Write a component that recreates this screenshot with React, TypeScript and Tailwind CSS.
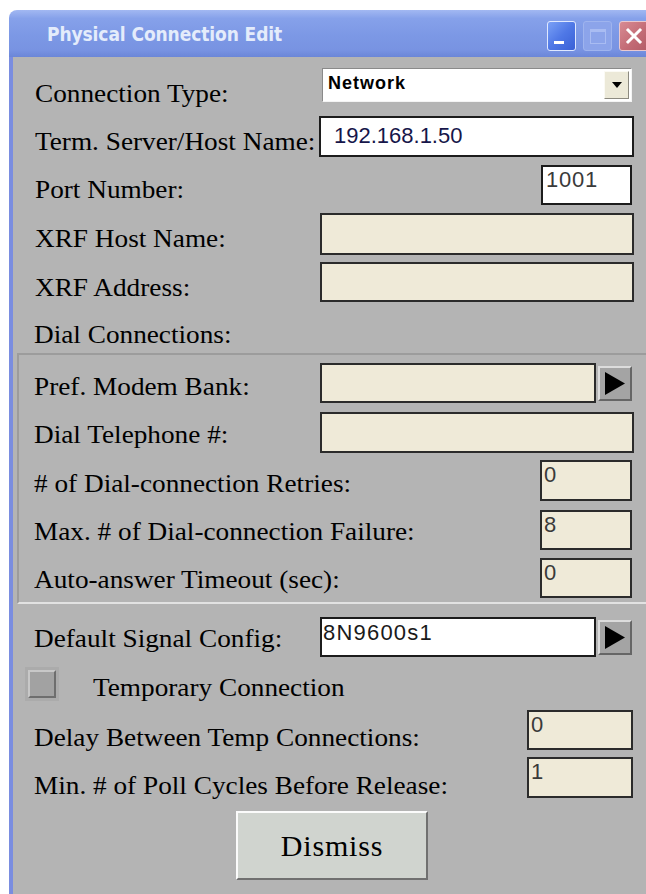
import React from "react";

function RightArrowButton() {
  return (
    <div className="w-[34px] h-[35px] bg-[#a4a4a4] border-2 border-t-[#dcdcdc] border-l-[#dcdcdc] border-b-[#666666] border-r-[#666666] flex items-center justify-center">
      <svg width="22" height="23" viewBox="0 0 22 23">
        <path d="M1 0 L21 11.5 L1 23 Z" fill="#000" />
      </svg>
    </div>
  );
}

function TitleBar() {
  return (
    <div className="h-[47px] rounded-tl-[8px] bg-[linear-gradient(to_bottom,#a2b8f2_0%,#86a1ea_18%,#7c98e5_55%,#7893e2_85%,#6b86d8_100%)] flex items-start overflow-hidden">
      <div className="ml-[38px] mt-[15px] text-[19px] leading-none font-bold text-[#e4ecfb] font-['DejaVu_Sans_Condensed','DejaVu_Sans',sans-serif] tracking-[-0.1px]">
        Physical Connection Edit
      </div>
      <div className="ml-auto mt-[11px] flex gap-[7px] w-[99px] overflow-hidden shrink-0">
        {/* minimize */}
        <div className="relative w-[29px] h-[30px] shrink-0 rounded-[3px] border border-[#dfe8ff] bg-[linear-gradient(135deg,#7aa0f6_0%,#4f78e6_50%,#3a60d6_100%)]">
          <div className="absolute left-[6px] bottom-[6px] w-[10px] h-[3px] bg-white" />
        </div>
        {/* maximize (disabled) */}
        <div className="relative w-[29px] h-[30px] shrink-0 rounded-[3px] border border-[#9fb4ee] bg-[#8ca4ea] flex items-center justify-center">
          <div className="w-[16px] h-[15px] border border-[#a9bcf2] border-t-[3px]" />
        </div>
        {/* close */}
        <div className="relative w-[30px] h-[30px] shrink-0 rounded-[3px] border border-[#e9c9cf] bg-[linear-gradient(135deg,#d88b93_0%,#c26a74_60%,#b35c67_100%)] flex items-center justify-center">
          <svg width="18" height="18" viewBox="0 0 18 18">
            <path d="M3 3 L15 15 M15 3 L3 15" stroke="#fff" strokeWidth="3" strokeLinecap="square" />
          </svg>
        </div>
      </div>
    </div>
  );
}

// Wide X11-style serif labels
const label = "text-[25px] leading-none origin-left scale-x-[1.09] text-black font-['Liberation_Serif','Times_New_Roman',serif] whitespace-nowrap";
const val = "text-[22px] leading-none font-['Liberation_Sans',Arial,sans-serif] whitespace-nowrap";

export default function App() {
  return (
    <div className="w-[646px] h-[894px] bg-white pl-[9px] pt-[10px] overflow-hidden">
      <div className="h-[884px] flex flex-col">
        <TitleBar />
        <div className="flex flex-1">
          <div className="w-[4px] bg-[#7a8de0] shrink-0" />
          <div className="flex-1 bg-[#b4b4b4] flex flex-col">
            {/* Connection Type */}
            <div className="flex h-[53px]">
              <div className={`${label} ml-[22px] mt-[24px]`}>Connection Type:</div>
              <div className="ml-auto mr-[14px] mt-[11px] w-[310px] h-[34px] bg-white border border-t-[#8a8a8a] border-l-[#8a8a8a] border-b-[#f4f4f4] border-r-[#f4f4f4] flex items-start">
                <div className="flex-1 pl-[5px] pt-[5px] text-[18px] leading-none tracking-[1px] font-bold font-['Liberation_Sans',Arial,sans-serif] text-black">
                  Network
                </div>
                <div className="mt-[2px] mr-[2px] w-[25px] h-[28px] bg-[#ece9d8] border border-t-[#fbfaf4] border-l-[#fbfaf4] border-b-[#8c8a80] border-r-[#8c8a80] flex items-center justify-center">
                  <svg width="10" height="6" viewBox="0 0 10 6">
                    <path d="M0 0 L10 0 L5 6 Z" fill="#000" />
                  </svg>
                </div>
              </div>
            </div>

            {/* Term. Server/Host Name */}
            <div className="flex h-[50px]">
              <div className={`${label} ml-[22px] mt-[19px]`}>Term. Server/Host Name:</div>
              <div className={`ml-auto mr-[12px] mt-[6px] w-[315px] h-[41px] shrink-0 bg-white border-2 border-[#1c1c1c] pl-[13px] pt-[7px] ${val} text-[#16164a]`}>
                192.168.1.50
              </div>
            </div>

            {/* Port Number */}
            <div className="flex h-[48px]">
              <div className={`${label} ml-[22px] mt-[17px]`}>Port Number:</div>
              <div className={`ml-auto mr-[14px] mt-[5px] w-[91px] h-[40px] bg-white border-2 border-[#1c1c1c] pl-[3px] pt-[2px] ${val} tracking-[0.8px] text-[#3a3a3a]`}>
                1001
              </div>
            </div>

            {/* XRF Host Name */}
            <div className="flex h-[49px]">
              <div className={`${label} ml-[22px] mt-[18px]`}>XRF Host Name:</div>
              <div className="ml-auto mr-[12px] mt-[5px] w-[314px] h-[42px] bg-[#efead8] border-2 border-[#2b2b2b]" />
            </div>

            {/* XRF Address */}
            <div className="flex h-[48px]">
              <div className={`${label} ml-[22px] mt-[18px]`}>XRF Address:</div>
              <div className="ml-auto mr-[12px] mt-[5px] w-[314px] h-[40px] bg-[#efead8] border-2 border-[#2b2b2b]" />
            </div>

            {/* Dial Connections heading */}
            <div className="flex h-[48px]">
              <div className={`${label} ml-[21px] mt-[17px]`}>Dial Connections:</div>
            </div>

            {/* Dial Connections group */}
            <div className="ml-[4px] border-t-2 border-l-2 border-b-2 border-t-[#9c9c9c] border-l-[#9c9c9c] border-b-[#e2e2e2] flex flex-col">
              <div className="flex h-[50px]">
                <div className={`${label} ml-[15px] mt-[19px]`}>Pref. Modem Bank:</div>
                <div className="ml-auto mr-[14px] mt-[8px] flex gap-[2px]">
                  <div className="w-[276px] h-[40px] bg-[#efead8] border-2 border-[#2b2b2b]" />
                  <div className="mt-[3px]">
                    <RightArrowButton />
                  </div>
                </div>
              </div>
              <div className="flex h-[51px]">
                <div className={`${label} ml-[15px] mt-[17px]`}>Dial Telephone #:</div>
                <div className="ml-auto mr-[12px] mt-[7px] w-[314px] h-[41px] bg-[#efead8] border-2 border-[#2b2b2b]" />
              </div>
              <div className="flex h-[49px]">
                <div className={`${label} ml-[15px] mt-[15px]`}>
                  # of Dial-connection Retries:
                </div>
                <div className={`ml-auto mr-[14px] mt-[4px] w-[92px] h-[41px] bg-[#efead8] border-2 border-[#2b2b2b] pl-[2px] pt-[2px] ${val} text-[#3a3a3a]`}>
                  0
                </div>
              </div>
              <div className="flex h-[49px]">
                <div className={`${label} ml-[15px] mt-[14px]`}>
                  Max. # of Dial-connection Failure:
                </div>
                <div className={`ml-auto mr-[14px] mt-[5px] w-[92px] h-[40px] bg-[#efead8] border-2 border-[#2b2b2b] pl-[2px] pt-[2px] ${val} text-[#3a3a3a]`}>
                  8
                </div>
              </div>
              <div className="flex h-[48px]">
                <div className={`${label} ml-[15px] mt-[13px]`}>
                  Auto-answer Timeout (sec):
                </div>
                <div className={`ml-auto mr-[14px] mt-[4px] w-[92px] h-[40px] bg-[#efead8] border-2 border-[#2b2b2b] pl-[2px] pt-[2px] ${val} text-[#3a3a3a]`}>
                  0
                </div>
              </div>
            </div>

            {/* Default Signal Config */}
            <div className="flex h-[57px]">
              <div className={`${label} ml-[21px] mt-[22px]`}>Default Signal Config:</div>
              <div className="ml-auto mr-[14px] mt-[13px] flex gap-[2px]">
                <div className={`w-[276px] h-[40px] bg-white border-2 border-[#1c1c1c] pl-[1px] pt-[3px] ${val} tracking-[1.2px] text-[#1a1a1a]`}>
                  8N9600s1
                </div>
                <div className="mt-[3px]">
                  <RightArrowButton />
                </div>
              </div>
            </div>

            {/* Temporary Connection */}
            <div className="flex h-[44px]">
              <div className="ml-[12px] mt-[6px] w-[34px] h-[34px] bg-[#ababab] p-[3px]">
                <div className="w-full h-full bg-[#a2a2a2] border-2 border-t-[#c8c8c8] border-l-[#c8c8c8] border-b-[#6e6e6e] border-r-[#6e6e6e]" />
              </div>
              <div className={`${label} ml-[34px] mt-[14px]`}>Temporary Connection</div>
            </div>

            {/* Delay Between Temp Connections */}
            <div className="flex h-[49px]">
              <div className={`${label} ml-[21px] mt-[20px]`}>Delay Between Temp Connections:</div>
              <div className={`ml-auto mr-[13px] mt-[5px] w-[106px] h-[40px] bg-[#efead8] border-2 border-[#2b2b2b] pl-[2px] pt-[2px] ${val} text-[#3a3a3a]`}>
                0
              </div>
            </div>

            {/* Min. # of Poll Cycles */}
            <div className="flex h-[50px]">
              <div className={`${label} ml-[21px] mt-[19px]`}>Min. # of Poll Cycles Before Release:</div>
              <div className={`ml-auto mr-[13px] mt-[3px] w-[106px] h-[41px] bg-[#efead8] border-2 border-[#2b2b2b] pl-[2px] pt-[2px] ${val} text-[#3a3a3a]`}>
                1
              </div>
            </div>

            {/* Dismiss */}
            <div className="flex">
              <button className="ml-[223px] mt-[7px] w-[192px] h-[69px] bg-[#d0d4cf] border-2 border-t-[#fbfbfb] border-l-[#fbfbfb] border-b-[#707070] border-r-[#707070] text-[30px] leading-none tracking-[0.8px] text-black font-['Liberation_Serif','Times_New_Roman',serif]">
                Dismiss
              </button>
            </div>
          </div>
        </div>
      </div>
    </div>
  );
}
